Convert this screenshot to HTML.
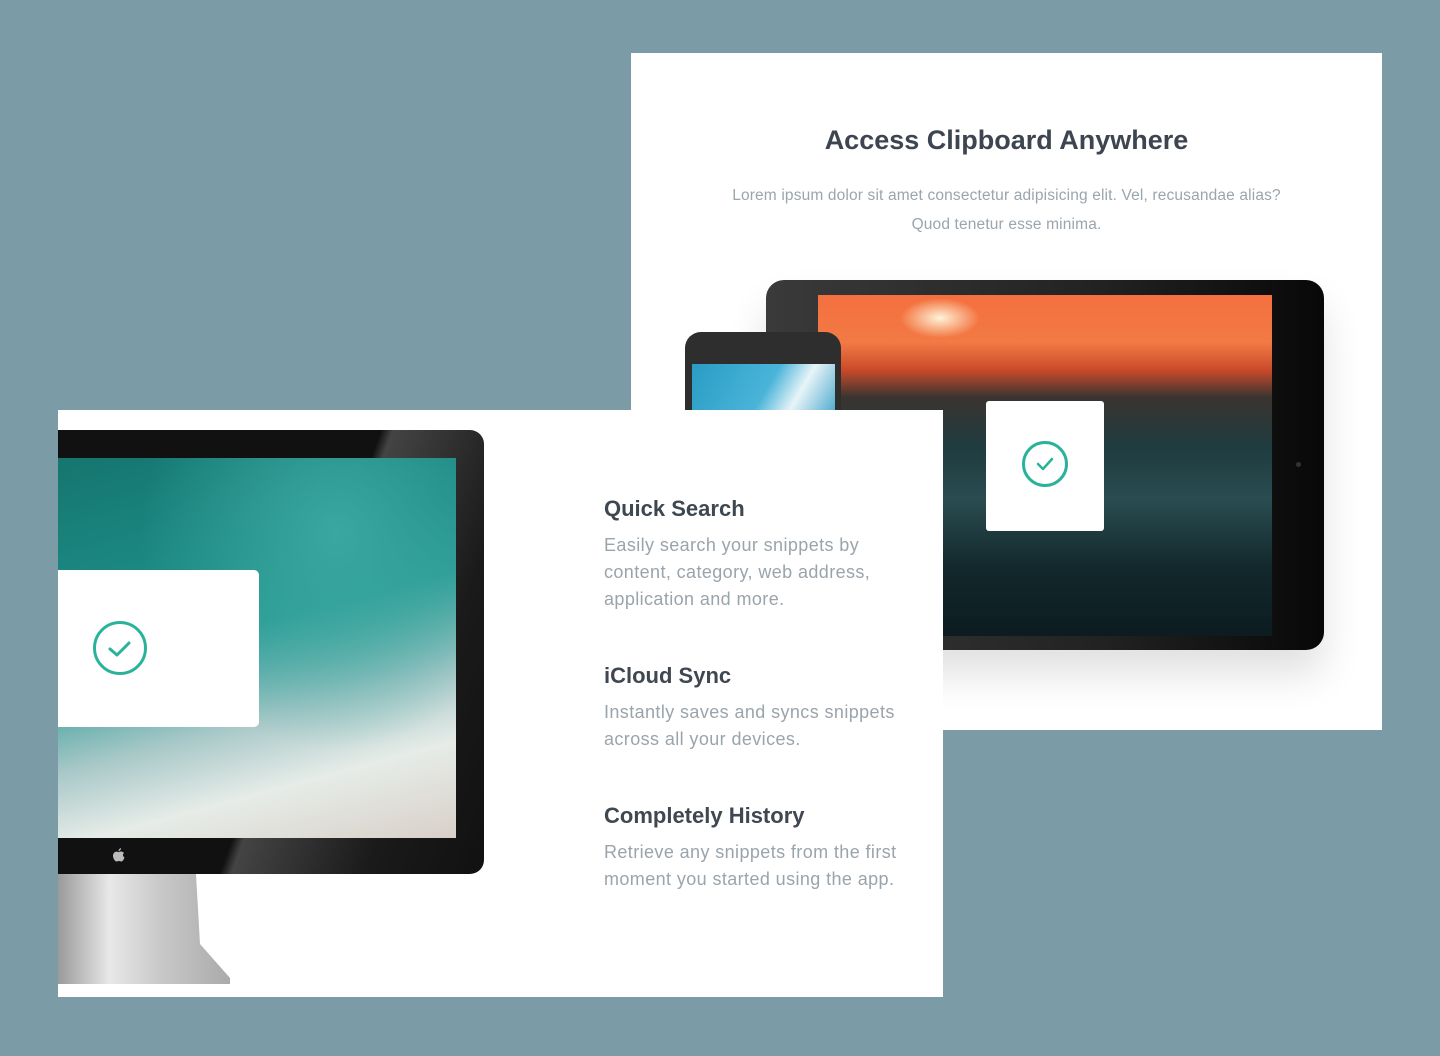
<!DOCTYPE html>
<html><head><meta charset="utf-8"><style>
*{margin:0;padding:0;box-sizing:border-box}
body{width:1440px;height:1056px;background:#7b9ca6;position:relative;overflow:hidden;font-family:"Liberation Sans",sans-serif}
.abs{position:absolute}
.card1{left:631px;top:53px;width:751px;height:677px;background:#fff}
.card2{left:58px;top:410px;width:885px;height:587px;background:#fff;overflow:hidden}
h1{position:absolute;left:631px;width:751px;top:125px;text-align:center;font-size:27px;font-weight:bold;color:#3d4650}
.p{position:absolute;left:631px;width:751px;text-align:center;font-size:15.5px;color:#9aa5ad;letter-spacing:0.15px}
.h{position:absolute;left:604px;font-size:22px;font-weight:bold;color:#3f4750}
.b{position:absolute;left:604px;font-size:18px;line-height:27px;color:#9aa4ab;width:300px;letter-spacing:0.4px}
.chk{border-radius:50%;border:3px solid #2bb39a;position:absolute}
</style></head><body>
<div class="abs card1"></div>
<h1>Access Clipboard Anywhere</h1>
<div class="p" style="top:187px">Lorem ipsum dolor sit amet consectetur adipisicing elit. Vel, recusandae alias?</div>
<div class="p" style="top:216px">Quod tenetur esse minima.</div>
<!-- tablet -->
<div class="abs" style="left:766px;top:280px;width:558px;height:370px;border-radius:18px;background:linear-gradient(90deg,#3a3a3a,#222 60%,#080808);box-shadow:0 25px 40px rgba(0,0,0,0.12)"></div>
<div class="abs" style="left:818px;top:295px;width:454px;height:341px;background:linear-gradient(180deg,#f5703e 0%,#f27a45 14%,#c94a2a 22%,#3a3430 30%,#1f3c40 45%,#2a4c50 60%,#12282c 80%,#0c1c20 100%)"></div>
<div class="abs" style="left:900px;top:298px;width:80px;height:40px;border-radius:50%;background:radial-gradient(#fff3d8,rgba(255,220,160,0) 70%)"></div>
<div class="abs" style="left:1296px;top:462px;width:5px;height:5px;border-radius:50%;background:#333"></div>
<!-- phone -->
<div class="abs" style="left:685px;top:332px;width:156px;height:120px;border-radius:16px 16px 0 0;background:#2e2e2e"></div>
<div class="abs" style="left:692px;top:364px;width:143px;height:60px;background:linear-gradient(120deg,#2a9cc4,#4ab4d8 50%,#e8f4f8 70%,#3aa0c8)"></div>
<div class="abs" style="left:986px;top:401px;width:118px;height:130px;background:#fff;border-radius:3px"></div>
<div class="chk" style="left:1022px;top:441px;width:46px;height:46px"></div>
<svg class="abs" style="left:1022px;top:441px" width="46" height="46"><path d="M16 23 L21 28 L30 18" stroke="#2bb39a" stroke-width="2.5" fill="none" stroke-linecap="round" stroke-linejoin="round"/></svg>
<!-- bottom card -->
<div class="abs card2">
  <div class="abs" style="left:0;top:464px;width:172px;height:110px;background:linear-gradient(90deg,#9a9a9a,#e8e8e8 30%,#c8c8c8 60%,#aaa);clip-path:polygon(0 0,138px 0,142px 70px,172px 104px,172px 110px,0 110px)"></div>
  <div class="abs" style="left:0;top:20px;width:426px;height:444px;border-radius:0 14px 14px 0;background:linear-gradient(110deg,#111 55%,#444 57%,#1a1a1a 80%,#111)"></div>
  <div class="abs" style="left:0;top:48px;width:398px;height:380px;background:radial-gradient(ellipse at 70% 20%,#3aa8a0,transparent 50%),linear-gradient(165deg,#16756f 0%,#1c8a84 30%,#2a9a94 45%,#a8c8c8 65%,#e6ece8 80%,#d8d0c8 100%)"></div>
  <svg class="abs" style="left:55px;top:438px" width="12" height="14" viewBox="0 0 12 14"><path d="M8 0 C8 2 6.5 3 5.5 3 C5.5 1.5 7 0.2 8 0Z M6 4 C7 3.5 8 3.3 9 3.6 C10 4 10.5 4.5 11 5 C9.5 6 9.5 8.5 11.5 9.3 C11 11 9.8 13.5 8.5 13.5 C7.5 13.5 7.2 13 6 13 C4.8 13 4.4 13.5 3.5 13.5 C2 13.5 0 10.5 0 7.8 C0 5 2 3.6 3.5 3.6 C4.6 3.6 5.3 4 6 4Z" fill="#bbb"/></svg>
  <div class="abs" style="left:0;top:160px;width:201px;height:157px;background:#fff;border-radius:0 5px 5px 0"></div>
  <div class="chk" style="left:35px;top:211px;width:54px;height:54px"></div>
  <svg class="abs" style="left:35px;top:211px" width="54" height="54"><path d="M17 28 L24 34 L36 22" stroke="#2bb39a" stroke-width="3" fill="none" stroke-linecap="round" stroke-linejoin="round"/></svg>
</div>
<div class="h" style="top:496px">Quick Search</div>
<div class="b" style="top:532px">Easily search your snippets by content, category, web address, application and more.</div>
<div class="h" style="top:663px">iCloud Sync</div>
<div class="b" style="top:699px">Instantly saves and syncs snippets across all your devices.</div>
<div class="h" style="top:803px">Completely History</div>
<div class="b" style="top:839px">Retrieve any snippets from the first moment you started using the app.</div>
</body></html>
